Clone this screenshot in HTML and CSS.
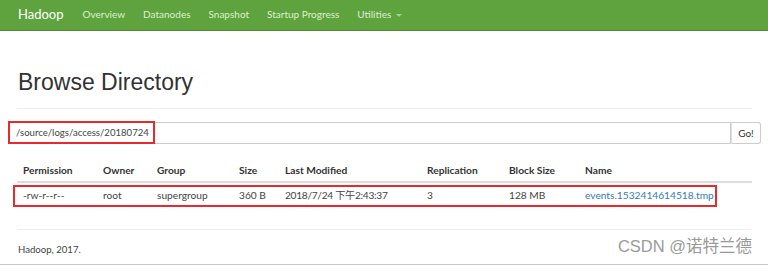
FILE: index.html
```html
<!DOCTYPE html>
<html>
<head>
<meta charset="utf-8">
<link rel="stylesheet" href="styles.css">
</head>
<body>
<nav class="navbar">
  <span class="brand">Hadoop</span>
  <a class="nav-link">Overview</a>
  <a class="nav-link">Datanodes</a>
  <a class="nav-link">Snapshot</a>
  <a class="nav-link">Startup Progress</a>
  <a class="nav-link">Utilities <span class="caret"></span></a>
</nav>
<main class="page">
  <h1 class="title">Browse Directory</h1>
  <div class="search">
    <div class="path-input">/source/logs/access/20180724</div>
    <div class="go-btn">Go!</div>
    <div class="mark mark-input"></div>
  </div>
  <div class="table-wrap">
    <table class="listing">
      <colgroup>
        <col class="c1"><col class="c2"><col class="c3"><col class="c4"><col class="c5"><col class="c6"><col class="c7"><col class="c8">
      </colgroup>
      <thead>
        <tr><th>Permission</th><th>Owner</th><th>Group</th><th>Size</th><th>Last Modified</th><th>Replication</th><th>Block Size</th><th>Name</th></tr>
      </thead>
      <tbody>
        <tr><td>-rw-r--r--</td><td>root</td><td>supergroup</td><td>360 B</td><td class="date">2018/7/24 下午2:43:37</td><td>3</td><td>128 MB</td><td><a class="file-link">events.1532414614518.tmp</a></td></tr>
      </tbody>
    </table>
    <div class="mark mark-row"></div>
  </div>
  <footer class="footer">Hadoop, 2017.</footer>
  <div class="watermark">CSDN @诺特兰德</div>
</main>
</body>
</html>
```
FILE: styles.css
```css
* { box-sizing: border-box; }
body {
  margin: 0;
  font-family: Lato, "Noto Sans CJK SC", sans-serif;
  color: #333;
  background: #fff;
  height: 265px;
  overflow: hidden;
}
.navbar {
  height: 31px;
  background: #5fa33e;
  border-bottom: 1px solid #4e8a33;
  display: flex;
  align-items: center;
  padding-left: 18px;
}
.brand {
  color: #fff;
  font-size: 13px;
  margin-right: 19px;
  position: relative;
  top: -1px;
}
.nav-link {
  color: #ddf0d2;
  font-size: 10px;
  margin-right: 18px;
  position: relative;
  top: -1px;
}
.caret {
  display: inline-block;
  width: 0; height: 0;
  border-left: 3px solid transparent;
  border-right: 3px solid transparent;
  border-top: 3px solid #a9cf95;
  vertical-align: middle;
  margin-left: 2px;
}
.page {
  position: relative;
  padding: 0 16px 0 17px;
  height: 234px;
  border-bottom: 1px solid #c8c8c8;
}
.title {
  margin: 0;
  padding-top: 38px;
  padding-bottom: 12px;
  font-family: "Liberation Sans", Arial, sans-serif;
  font-weight: 400;
  font-size: 23px;
  line-height: 27px;
  color: #333;
  border-bottom: 1px solid #eee;
  padding-left: 1px;
}
.search {
  position: relative;
  display: flex;
  margin: 13px -9px 0 -9px;
  height: 22px;
}
.path-input {
  flex: 1;
  border: 1px solid #ccc;
  border-radius: 3px 0 0 3px;
  font-size: 9.6px;
  line-height: 20px;
  padding-left: 7px;
  color: #444;
}
.go-btn {
  width: 30px;
  border: 1px solid #ccc;
  border-left: 1px solid #ddd;
  border-radius: 0 3px 3px 0;
  font-size: 10px;
  line-height: 20px;
  text-align: center;
  color: #333;
}
.mark {
  position: absolute;
  border: 2px solid #e8292e;
  pointer-events: none;
}
.mark-input {
  left: 0; top: -1px;
  width: 147px; height: 23px;
}
.table-wrap {
  position: relative;
  margin-top: 16px;
}
.listing {
  width: 735px;
  border-collapse: collapse;
  font-size: 10.2px;
  table-layout: fixed;
}
.c1 { width: 80px; } .c2 { width: 54px; } .c3 { width: 82px; } .c4 { width: 46px; }
.c5 { width: 142px; } .c6 { width: 82px; } .c7 { width: 76px; } .c8 { width: 173px; }
.listing th {
  text-align: left;
  font-weight: 700;
  padding: 4px 6px 5px;
  line-height: 12px;
  border-bottom: 2px solid #ddd;
  color: #333;
  white-space: nowrap;
}
.listing td {
  padding: 6px 6px 6px;
  line-height: 12px;
  color: #444;
  white-space: nowrap;
}
.listing td.date { letter-spacing: -0.3px; }
.file-link { color: #337ab7; }
.mark-row {
  left: -4px; top: 25px;
  width: 704px; height: 22px;
}
.footer {
  margin-top: 22px;
  border-top: 1px solid #eee;
  padding-top: 14px;
  padding-left: 1px;
  font-size: 9.6px;
  color: #444;
}
.watermark {
  position: absolute;
  right: 16px;
  top: 202px;
  font-family: "Liberation Sans", "Noto Sans CJK SC", sans-serif;
  font-size: 16.5px;
  color: #9a9a9a;
}
```
